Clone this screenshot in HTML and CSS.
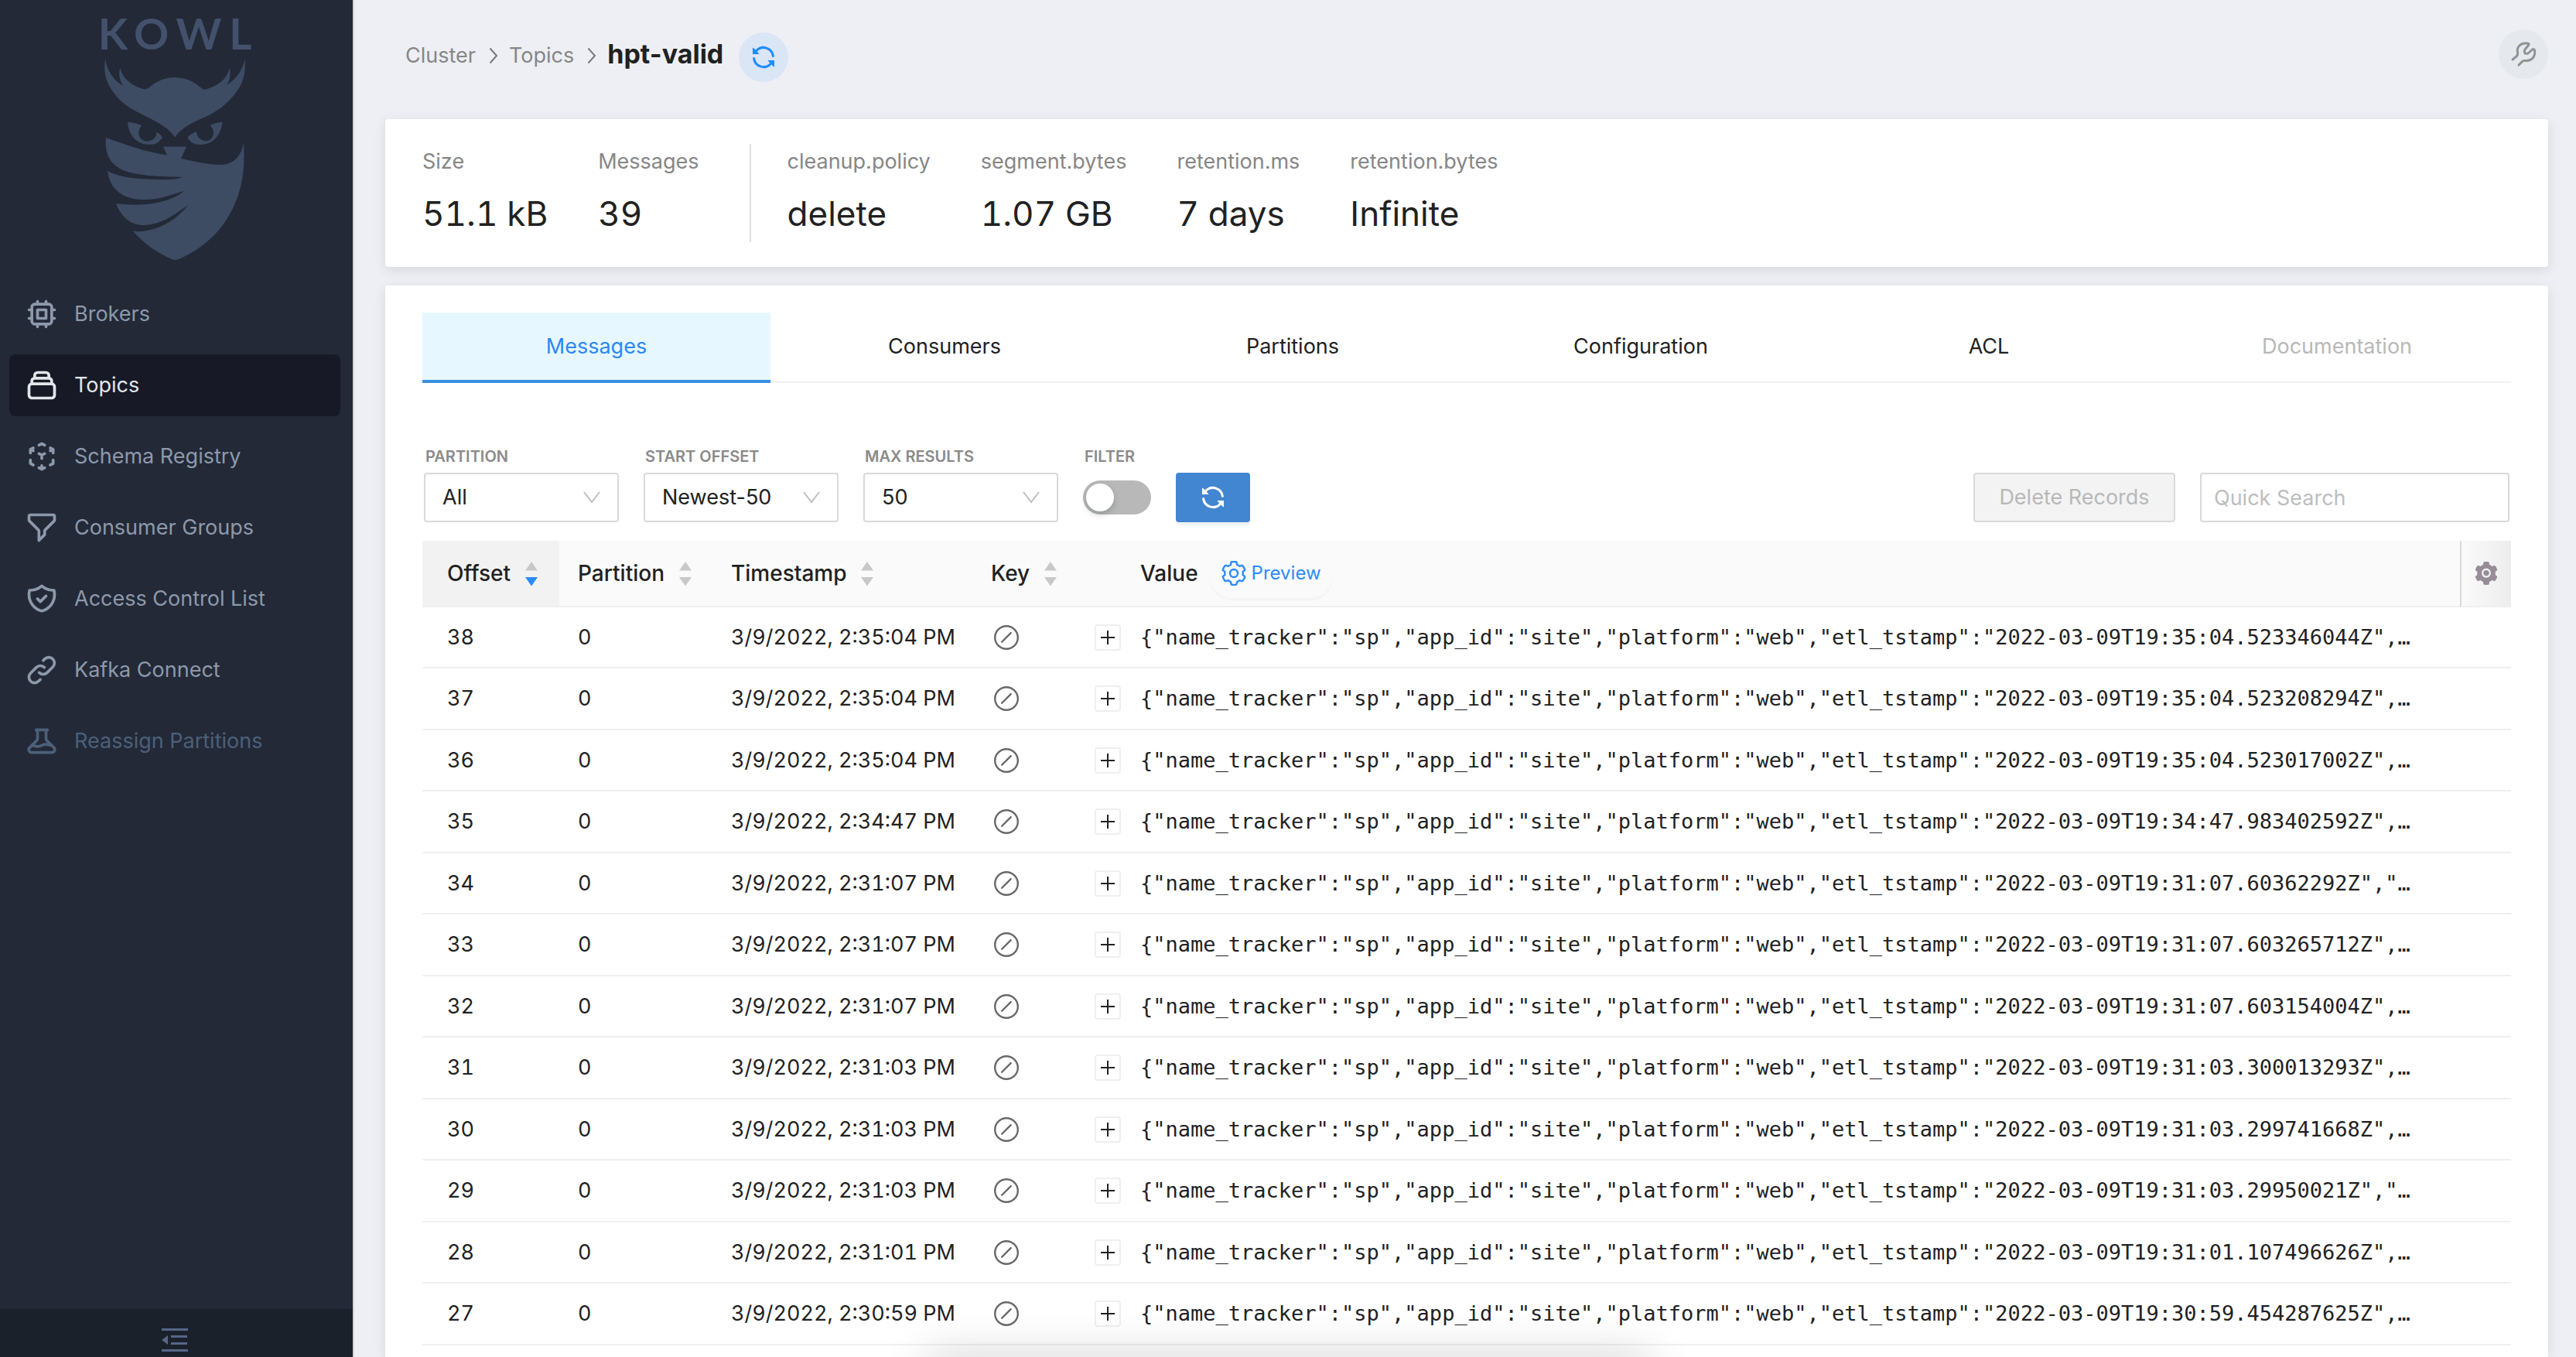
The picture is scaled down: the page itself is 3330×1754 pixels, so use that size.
FILE: index.html
```
<!DOCTYPE html>
<html lang="en">
<head>
<meta charset="utf-8">
<title>hpt-valid</title>
<link rel="stylesheet" href="styles.css">
</head>
<body>
<svg class="sprite" aria-hidden="true">
  <symbol id="sync" viewBox="0 0 16 16"><path fill="currentColor" d="M8 2.5a5.487 5.487 0 00-4.131 1.869l1.204 1.204A.25.25 0 014.896 6H1.25A.25.25 0 011 5.75V2.104a.25.25 0 01.427-.177l1.38 1.38A7.001 7.001 0 0114.95 7.16a.75.75 0 11-1.49.178A5.501 5.501 0 008 2.5zM1.705 8.005a.75.75 0 01.834.656 5.501 5.501 0 009.592 2.97l-1.204-1.204a.25.25 0 01.177-.427h3.646a.25.25 0 01.25.25v3.646a.25.25 0 01-.427.177l-1.38-1.38A7.001 7.001 0 011.05 8.84a.75.75 0 01.656-.834z"/></symbol>
  <symbol id="skip" viewBox="0 0 16 16"><path fill="currentColor" fill-rule="evenodd" d="M1.200 8a6.800 6.800 0 1113.600 0A6.800 6.800 0 011.200 8zM8 0a8 8 0 100 16A8 8 0 008 0zm3.280 5.500a.6.6 0 00-.85-.85l-5.800 5.800a.6.6 0 10.85.85l5.800-5.800z"/></symbol>
  <symbol id="gear" viewBox="64 64 896 896"><path fill="currentColor" fill-rule="evenodd" d="M512.5 390.6c-29.9 0-57.9 11.6-79.1 32.8-21.1 21.2-32.8 49.2-32.8 79.1 0 29.9 11.7 57.9 32.8 79.1 21.2 21.1 49.2 32.8 79.1 32.8 29.9 0 57.9-11.7 79.1-32.8 21.1-21.2 32.8-49.2 32.8-79.1 0-29.9-11.7-57.9-32.8-79.1a110.96 110.96 0 00-79.1-32.8zm412.3 235.5l-65.4-55.9c3.1-19 4.7-38.4 4.7-57.7s-1.6-38.8-4.7-57.7l65.4-55.9a32.03 32.03 0 009.3-35.2l-.9-2.6a442.5 442.5 0 00-79.6-137.7l-1.8-2.1a32.12 32.12 0 00-35.1-9.5l-81.2 28.9c-30-24.6-63.4-44-99.6-57.5l-15.7-84.9a32.05 32.05 0 00-25.8-25.7l-2.7-.5c-52-9.4-106.8-9.4-158.8 0l-2.7.5a32.05 32.05 0 00-25.8 25.7l-15.8 85.3a353.44 353.44 0 00-98.9 57.3l-81.8-29.1a32 32 0 00-35.1 9.5l-1.8 2.1a445.93 445.93 0 00-79.6 137.7l-.9 2.6c-4.5 12.5-.8 26.5 9.3 35.2l66.2 56.5c-3.1 18.8-4.6 38-4.6 57 0 19.2 1.5 38.4 4.6 57l-66 56.5a32.03 32.03 0 00-9.3 35.2l.9 2.6c18.1 50.3 44.8 96.8 79.6 137.7l1.8 2.1a32.12 32.12 0 0035.1 9.5l81.8-29.1c29.8 24.5 63 43.9 98.9 57.3l15.8 85.3a32.05 32.05 0 0025.8 25.7l2.7.5a448.27 448.27 0 00158.8 0l2.7-.5a32.05 32.05 0 0025.8-25.7l15.7-84.9c36.2-13.6 69.6-32.9 99.6-57.5l81.2 28.9a32 32 0 0035.1-9.5l1.8-2.1c34.8-41.1 61.5-87.4 79.6-137.7l.9-2.6c4.3-12.4.6-26.3-9.5-35zm-412.3 52.2c-97.1 0-175.8-78.7-175.8-175.8s78.7-175.8 175.8-175.8 175.8 78.7 175.8 175.8-78.7 175.8-175.8 175.8z"/></symbol>
  <symbol id="gear-line" viewBox="34 34 956 956"><g fill="none" stroke="currentColor" stroke-width="72"><path d="M924.8 626.1l-65.4-55.9c3.1-19 4.7-38.4 4.7-57.7s-1.6-38.8-4.7-57.7l65.4-55.9a32.03 32.03 0 009.3-35.2l-.9-2.6a442.5 442.5 0 00-79.6-137.7l-1.8-2.1a32.12 32.12 0 00-35.1-9.5l-81.2 28.9c-30-24.6-63.4-44-99.6-57.5l-15.7-84.9a32.05 32.05 0 00-25.8-25.7l-2.7-.5c-52-9.4-106.8-9.4-158.8 0l-2.7.5a32.05 32.05 0 00-25.8 25.7l-15.8 85.3a353.44 353.44 0 00-98.9 57.3l-81.8-29.1a32 32 0 00-35.1 9.5l-1.8 2.1a445.93 445.93 0 00-79.6 137.7l-.9 2.6c-4.5 12.5-.8 26.5 9.3 35.2l66.2 56.5c-3.1 18.8-4.6 38-4.6 57 0 19.2 1.5 38.4 4.6 57l-66 56.5a32.03 32.03 0 00-9.3 35.2l.9 2.6c18.1 50.3 44.8 96.8 79.6 137.7l1.8 2.1a32.12 32.12 0 0035.1 9.5l81.8-29.1c29.8 24.5 63 43.9 98.9 57.3l15.8 85.3a32.05 32.05 0 0025.8 25.7l2.7.5a448.27 448.27 0 00158.8 0l2.7-.5a32.05 32.05 0 0025.8-25.7l15.7-84.9c36.2-13.6 69.6-32.9 99.6-57.5l81.2 28.9a32 32 0 0035.1-9.5l1.8-2.1c34.8-41.1 61.5-87.4 79.6-137.7l.9-2.6c4.3-12.4.6-26.3-9.5-35z"/><circle cx="512" cy="512" r="150"/></g></symbol>
  <symbol id="sorter" viewBox="0 0 16 32"><path class="up" d="M8 0l8 11.500H0z"/><path class="down" d="M8 31.500L0 20h16z"/></symbol>
  <symbol id="chevron" viewBox="0 0 12 22"><path fill="none" stroke="currentColor" stroke-width="2" d="M1.500 1.500L10 11l-8.500 9.500"/></symbol>
</svg>
<div class="app">
  <aside class="sidebar">
    <a class="logo" href="#">
      <span class="wordmark">KOWL</span>
      <svg class="owl" viewBox="135 76 182 261" aria-hidden="true">
        <path d="M136 76C138 91 147 104 159 111C154 103 153 94 155.500 88C158 101 171 112 188 115.500Q191 115 194 112C213 96 239 96 258 112Q262 116 266 115.500C282 111 294 102 296.500 88C299 95 297 104 293 110C306 102 314 90 316.500 76C318 97 314 108 304 121C293 135 281 144 266 151C246 159 233 167 226.500 177.500C218 166 206 159 188 150C171 142 161 136 151 125C138 109 133 97 136 76z"/>
        <path d="M165 158Q176 158 183 162.500C178 168 178 176 183 180C189 185 199 182 202 175L202 171Q208 173 210 178C205 184 202 187 193 187C177 187 166 175 165 158z"/>
        <path d="M287.500 158Q279 158 271.500 162C278 168 277 177 271 181C264 185 254 179 254 170Q245 173 242.500 178C246 184 250 187 260 187C276 187 286 173 287.500 158z"/>
        <path d="M137 178C163 187 190 197 216 200.500L211 189.500H241L234 205C253 209 270 213 287 213C302 212 312 202 315 184C317 222 312 243 305 260C291 296 264 321 231 335Q226.500 337 222 335C203 327 185 314 172 299C204 301 228 284 243 265C223 280 209 289 188 291C168 292 156 279 150 263C186 268 219 262 238 247C220 252 205 259 182 258C159 257 142 245 139 221C157 231 188 232 216 232C224 232 231 231 236 229C210 228 173 228 155 218C141 210 135 197 137 178z"/>
      </svg>
    </a>
    <nav class="nav">
      <a href="#"><svg viewBox="0 0 24 24"><path d="M9 3v2m6-2v2M9 19v2m6-2v2M5 9H3m2 6H3m18-6h-2m2 6h-2M7 19h10a2 2 0 002-2V7a2 2 0 00-2-2H7a2 2 0 00-2 2v10a2 2 0 002 2zM9 9h6v6H9V9z"/></svg>Brokers</a>
      <a href="#" class="active"><svg viewBox="0 0 24 24"><path d="M19 11H5m14 0a2 2 0 012 2v6a2 2 0 01-2 2H5a2 2 0 01-2-2v-6a2 2 0 012-2m14 0V9a2 2 0 00-2-2M5 11V9a2 2 0 012-2m0 0V5a2 2 0 012-2h6a2 2 0 012 2v2M7 7h10"/></svg>Topics</a>
      <a href="#"><svg viewBox="0 0 24 24"><path d="M14 10l-2 1m0 0l-2-1m2 1v2.5M20 7l-2 1m2-1l-2-1m2 1v2.5M14 4l-2-1-2 1M4 7l2-1M4 7l2 1M4 7v2.5M12 21l-2-1m2 1l2-1m-2 1v-2.5M6 18l-2-1v-2.5M18 18l2-1v-2.5"/></svg>Schema Registry</a>
      <a href="#"><svg viewBox="0 0 24 24"><path d="M3 4a1 1 0 011-1h16a1 1 0 011 1v2.586a1 1 0 01-.293.707l-6.414 6.414a1 1 0 00-.293.707V17l-4 4v-6.586a1 1 0 00-.293-.707L3.293 7.293A1 1 0 013 6.586V4z"/></svg>Consumer Groups</a>
      <a href="#"><svg viewBox="0 0 24 24"><path d="M9 12l2 2 4-4m5.618-4.016A11.955 11.955 0 0112 2.944a11.955 11.955 0 01-8.618 3.040A12.020 12.020 0 003 9c0 5.591 3.824 10.290 9 11.622 5.176-1.332 9-6.030 9-11.622 0-1.042-.133-2.052-.382-3.016z"/></svg>Access Control List</a>
      <a href="#"><svg viewBox="0 0 24 24"><path d="M13.828 10.172a4 4 0 00-5.656 0l-4 4a4 4 0 105.656 5.656l1.102-1.101m-.758-4.899a4 4 0 005.656 0l4-4a4 4 0 00-5.656-5.656l-1.100 1.100"/></svg>Kafka Connect</a>
      <a href="#" class="disabled" aria-disabled="true"><svg viewBox="0 0 24 24"><path d="M19.428 15.428a2 2 0 00-1.022-.547l-2.387-.477a6 6 0 00-3.860.517l-.318.158a6 6 0 01-3.860.517L6.050 15.210a2 2 0 00-1.806.547M8 4h8l-1 1v5.172a2 2 0 00.586 1.414l5 5c1.260 1.260.367 3.414-1.415 3.414H4.828c-1.782 0-2.674-2.154-1.414-3.414l5-5A2 2 0 009 10.172V5L8 4z"/></svg>Reassign Partitions</a>
    </nav>
    <button class="collapse" type="button" aria-label="Collapse menu">
      <svg viewBox="0 0 34 30"><path fill="currentColor" d="M0 0h34v3H0zM12 9h21v3H12zM12 18h21v3H12zM0 27h34v3H0zM0 15l8-6v12z"/></svg>
    </button>
  </aside>
  <main class="main">
    <header class="topbar">
      <nav class="crumbs">
        <a href="#">Cluster</a>
        <svg class="chevron"><use href="#chevron"/></svg>
        <a href="#">Topics</a>
        <svg class="chevron"><use href="#chevron"/></svg>
        <h1>hpt-valid</h1>
      </nav>
      <button class="round refresh" type="button" aria-label="Refresh"><svg><use href="#sync"/></svg></button>
      <button class="round tools" type="button" aria-label="Tools"><svg viewBox="0 0 64 64"><path d="M18 39l5-4q2-2 1.500-5C23 23 28 18 34 18h3.500q2.500 0 1 2.500L34 26q-1 2-.500 4 1 2 4.500 1l5-4.500q3-2 3.500.500C48 36 42 41 35 40.500q-3-.5-4.500 1L26 46"/></svg></button>
    </header>
    <section class="card stats">
      <dl><dt>Size</dt><dd>51.1 kB</dd></dl>
      <dl><dt>Messages</dt><dd>39</dd></dl>
      <div class="divider"></div>
      <dl><dt>cleanup.policy</dt><dd>delete</dd></dl>
      <dl><dt>segment.bytes</dt><dd>1.07 GB</dd></dl>
      <dl><dt>retention.ms</dt><dd>7 days</dd></dl>
      <dl><dt>retention.bytes</dt><dd>Infinite</dd></dl>
    </section>
    <section class="card topic">
      <div class="tabs" role="tablist">
        <button type="button" role="tab" aria-selected="true">Messages</button>
        <button type="button" role="tab">Consumers</button>
        <button type="button" role="tab">Partitions</button>
        <button type="button" role="tab">Configuration</button>
        <button type="button" role="tab">ACL</button>
        <button type="button" role="tab" disabled>Documentation</button>
      </div>
      <form class="filters">
        <div class="field"><label for="partition">PARTITION</label><select id="partition"><option>All</option></select></div>
        <div class="field"><label for="start">START OFFSET</label><select id="start"><option>Newest-50</option></select></div>
        <div class="field"><label for="max">MAX RESULTS</label><select id="max"><option>50</option></select></div>
        <div class="field"><label for="filter">FILTER</label><span class="switch-box"><input id="filter" class="switch" type="checkbox"></span></div>
        <button class="primary" type="button" aria-label="Reload messages"><svg><use href="#sync"/></svg></button>
        <button class="delete" type="button" disabled>Delete Records</button>
        <input class="search" type="text" placeholder="Quick Search" aria-label="Quick Search">
      </form>
      <table class="messages">
        <colgroup><col class="c-offset"><col class="c-partition"><col class="c-time"><col class="c-key"><col class="c-expand"><col><col class="c-settings"></colgroup>
        <thead>
          <tr>
            <th class="sorted"><span>Offset<svg class="sorter desc"><use href="#sorter"/></svg></span></th>
            <th><span>Partition<svg class="sorter"><use href="#sorter"/></svg></span></th>
            <th><span>Timestamp<svg class="sorter"><use href="#sorter"/></svg></span></th>
            <th><span>Key<svg class="sorter"><use href="#sorter"/></svg></span></th>
            <th></th>
            <th><span>Value<button class="preview" type="button"><svg><use href="#gear-line"/></svg>Preview</button></span></th>
            <th class="settings"><button type="button" aria-label="Column settings"><svg><use href="#gear"/></svg></button></th>
          </tr>
        </thead>
        <tbody id="rows"></tbody>
      </table>
    </section>
  </main>
</div>
<div class="bottom-shade"></div>
<script src="rows.js"></script>
</body>
</html>
```
FILE: rows.js
```
const messages = [
  [38, '2:35:04', '19:35:04.523346044Z",…'],
  [37, '2:35:04', '19:35:04.523208294Z",…'],
  [36, '2:35:04', '19:35:04.523017002Z",…'],
  [35, '2:34:47', '19:34:47.983402592Z",…'],
  [34, '2:31:07', '19:31:07.60362292Z","…'],
  [33, '2:31:07', '19:31:07.603265712Z",…'],
  [32, '2:31:07', '19:31:07.603154004Z",…'],
  [31, '2:31:03', '19:31:03.300013293Z",…'],
  [30, '2:31:03', '19:31:03.299741668Z",…'],
  [29, '2:31:03', '19:31:03.29950021Z","…'],
  [28, '2:31:01', '19:31:01.107496626Z",…'],
  [27, '2:30:59', '19:30:59.454287625Z",…'],
];
document.getElementById('rows').innerHTML = messages.map(([offset, time, stamp]) => `
  <tr>
    <td>${offset}</td>
    <td>0</td>
    <td>3/9/2022, ${time} PM</td>
    <td><svg class="empty"><use href="#skip"/></svg></td>
    <td class="expand"><button type="button" aria-label="Expand row"></button></td>
    <td class="value" colspan="2">{"name_tracker":"sp","app_id":"site","platform":"web","etl_tstamp":"2022-03-09T${stamp}</td>
  </tr>`).join('');
```
FILE: styles.css
```
* { box-sizing: border-box; }
body {
  margin: 0;
  height: 100vh;
  overflow: hidden;
  background: #eeeff4;
  color: #212121;
  font: 27px/44px Inter, "Liberation Sans", sans-serif;
}
a { color: inherit; text-decoration: none; }
button, input, select { font: inherit; color: inherit; margin: 0; }
button { border: 0; padding: 0; background: none; }
.sprite { position: absolute; width: 0; height: 0; }
.app { display: flex; height: 100vh; }

/* Sidebar */
.sidebar {
  flex: none;
  display: flex;
  flex-direction: column;
  width: 458px;
  background: #232937;
  border-right: 2px solid #d5d5d8;
}
.logo {
  display: flex;
  flex-direction: column;
  align-items: center;
  padding: 15px 4px 0 0;
}
.wordmark {
  font-family: Lato, sans-serif;
  font-weight: 700;
  font-size: 56px;
  line-height: 56px;
  letter-spacing: 10px;
  padding-left: 10px;
  color: #43516c;
}
.owl { width: 182px; height: 261px; margin-top: 5px; fill: #3d4b63; }
.nav {
  display: flex;
  flex-direction: column;
  gap: 12px;
  padding: 29px 16px 0 12px;
}
.nav a {
  display: flex;
  align-items: center;
  gap: 20px;
  height: 80px;
  padding-left: 20px;
  border-radius: 8px;
  color: #8d99ab;
}
.nav svg {
  width: 44px;
  height: 44px;
  fill: none;
  stroke: currentColor;
  stroke-width: 2;
  stroke-linecap: round;
  stroke-linejoin: round;
}
.nav .active { background: #171a26; color: #e2e6ea; }
.nav .disabled { color: #4c6079; }
.collapse {
  display: flex;
  justify-content: center;
  align-items: flex-end;
  height: 62px;
  margin-top: auto;
  padding: 0 4px 7px 0;
  background: #1b212b;
  color: #556687;
}
.collapse svg { width: 34px; height: 30px; }

/* Page header */
.main { flex: 1; min-width: 0; display: flex; flex-direction: column; padding: 0 36px 0 40px; }
.topbar { flex: none; display: flex; align-items: center; height: 154px; padding: 0 0 14px 26px; }
.crumbs { display: flex; align-items: center; margin-top: 4px; color: #868686; }
.chevron { width: 12px; height: 22px; margin: 0 14px 0 17px; color: #777; }
h1 { margin: 0 0 4px; font-size: 34px; font-weight: 700; color: #212121; }
.round {
  display: flex;
  align-items: center;
  justify-content: center;
  width: 64px;
  height: 64px;
  border-radius: 50%;
}
.refresh { margin: 8px 0 0 20px; background: #dae5f5; color: #1f8cff; }
.refresh svg { width: 32px; height: 32px; }
.tools { margin-left: auto; background: #e5e9ee; }
.tools svg { width: 64px; height: 64px; fill: none; stroke: #929292; stroke-width: 3; stroke-linecap: round; stroke-linejoin: round; }

/* Cards */
.card { background: #fff; border-radius: 4px; box-shadow: 0 4px 16px rgba(0, 0, 0, .1); }
.stats { flex: none; display: flex; gap: 65px; padding: 32px 48px; margin-bottom: 24px; }
.stats dl { margin: 0; }
.stats dt { color: #868686; line-height: 46px; }
.stats dd { margin: 8px 0 0; font-size: 44px; line-height: 73px; font-variant-numeric: tabular-nums; }
.divider { width: 2px; background: #e0e0e0; margin-right: -18px; }
.topic { flex: 1; min-height: 0; overflow: hidden; padding: 35px 48px 0; border-radius: 4px 4px 0 0; }

/* Tabs */
.tabs { display: grid; grid-template-columns: repeat(6, 1fr); border-bottom: 2px solid #f0f0f0; }
.tabs button { height: 91px; border-bottom: 4px solid transparent; margin-bottom: -2px; }
.tabs [aria-selected] { background: #e6f7ff; color: #2b87f5; border-color: #3a8ee0; }
.tabs [disabled] { color: #b8b8b8; }

/* Filters */
.filters { display: flex; align-items: flex-end; gap: 32px; padding: 80px 2px 24px; }
.field { display: flex; flex-direction: column; }
.field label { padding-left: 2px; margin-bottom: 6px; font-size: 20px; line-height: 30px; font-weight: 600; color: #8a8a8a; }
select {
  appearance: none;
  width: 252px;
  height: 64px;
  padding: 0 22px;
  border: 2px solid #d9d9d9;
  border-radius: 4px;
  background: #fff url("data:image/svg+xml,%3Csvg xmlns='http://www.w3.org/2000/svg' width='22' height='16'%3E%3Cpath d='M1 1l10 13L21 1' fill='none' stroke='%23bfbfbf' stroke-width='2'/%3E%3C/svg%3E") no-repeat right 22px center;
}
.switch-box { display: flex; align-items: center; height: 64px; }
.switch {
  appearance: none;
  width: 88px;
  height: 44px;
  padding: 4px;
  border-radius: 22px;
  background: #b8b8b8;
}
.switch::before {
  content: "";
  display: block;
  width: 36px;
  height: 36px;
  border-radius: 50%;
  background: #fff;
  box-shadow: 0 4px 8px rgba(0, 35, 11, .2);
}
.primary {
  display: flex;
  align-items: center;
  justify-content: center;
  width: 96px;
  height: 64px;
  border-radius: 4px;
  background: #4285d0;
  color: #fff;
  box-shadow: 0 4px 0 rgba(0, 0, 0, .05);
}
.primary svg { width: 32px; height: 32px; }
.delete {
  width: 261px;
  height: 64px;
  margin-left: auto;
  border: 2px solid #d9d9d9;
  border-radius: 4px;
  background: #f3f3f3;
  color: #b8b8b8;
}
.search { width: 400px; height: 64px; padding: 0 16px; border: 2px solid #d9d9d9; border-radius: 4px; background: #fff; }
.search::placeholder { color: #bdbdbd; opacity: 1; }

/* Messages table */
.messages { width: 100%; table-layout: fixed; border-collapse: separate; border-spacing: 0; }
.c-offset { width: 177px; }
.c-partition { width: 198px; }
.c-time { width: 336px; }
.c-key { width: 142px; }
.c-expand { width: 51px; }
.c-settings { width: 66px; }
th { height: 86px; padding: 0 0 0 24px; font-size: 28px; font-weight: 500; text-align: left; background: #fafafa; border-bottom: 2px solid #efefef; }
th:first-child { padding-left: 32px; border-top-left-radius: 4px; }
th.sorted { background: #f2f2f2; }
th span { display: flex; align-items: center; }
.sorter { width: 16px; height: 32px; margin: 2px 0 0 19px; fill: #c8c8c8; color: #c8c8c8; }
.desc { color: #2a8cff; }
#sorter .down { fill: currentColor; }
.preview {
  display: flex;
  align-items: center;
  gap: 7px;
  height: 64px;
  margin-left: 14px;
  padding: 0 16px;
  border-radius: 32px;
  box-shadow: 0 4px 0 rgba(0, 0, 0, .02);
  font-size: 24px;
  font-weight: 400;
  color: #2b8cfb;
}
.preview svg { width: 32px; height: 32px; }
th.settings { padding: 0; border-left: 2px solid #dadada; background: linear-gradient(90deg, #fafafa, #ededed); }
.settings button { display: flex; justify-content: center; width: 100%; }
.settings svg { width: 30px; height: 30px; color: #978c98; }
td { height: 80px; padding: 0 0 0 24px; border-bottom: 2px solid #efefef; white-space: nowrap; font-variant-numeric: tabular-nums; }
tr:nth-child(odd) td { height: 79px; }
td:first-child { padding-left: 32px; }
.empty { display: block; width: 32px; height: 32px; margin-left: 4px; color: #686868; }
td.expand { padding: 0 0 0 16px; }
.expand button {
  display: block;
  width: 34px;
  height: 34px;
  border: 2px solid #efefef;
  border-radius: 4px;
  background:
    linear-gradient(#212121, #212121) center / 18px 2px no-repeat,
    linear-gradient(#212121, #212121) center / 2px 18px no-repeat,
    #fff;
}
.value { overflow: hidden; font-family: "DejaVu Sans Mono", "Liberation Mono", monospace; }
.bottom-shade {
  position: fixed;
  left: 36%;
  right: 36%;
  bottom: -40px;
  height: 40px;
  box-shadow: 0 0 60px rgba(0, 0, 0, .2);
}
```
